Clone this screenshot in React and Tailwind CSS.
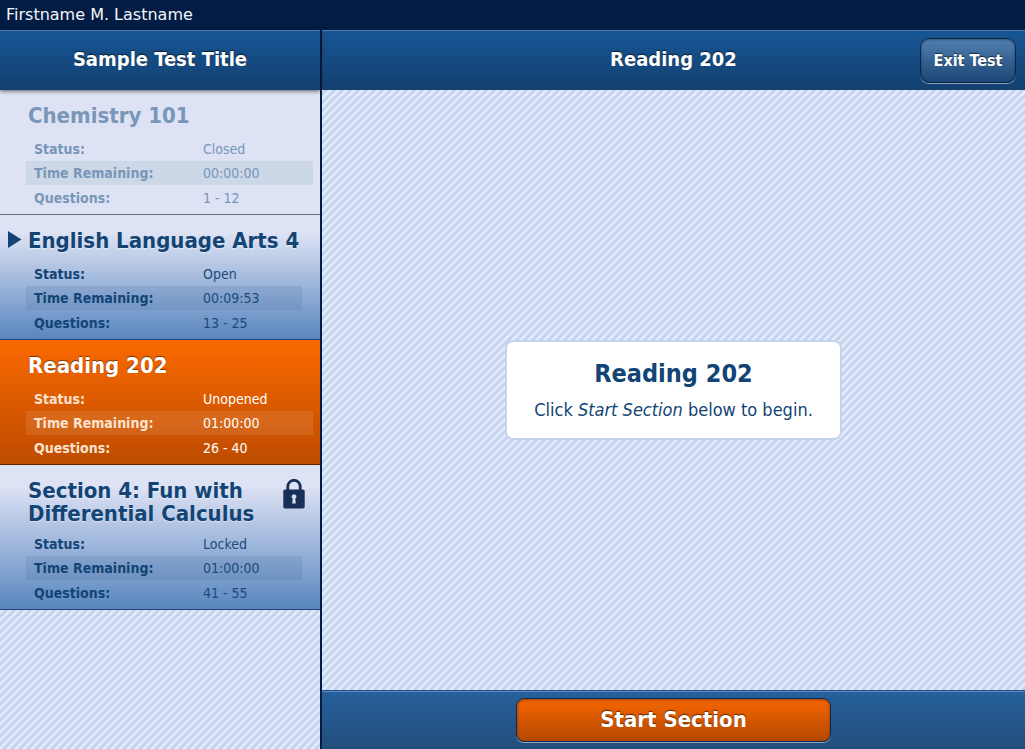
import React from "react";

const sections = [
  { title: "Chemistry 101", status: "Closed", time: "00:00:00", questions: "1 - 12", look: "closed" },
  { title: "English Language Arts 4", status: "Open", time: "00:09:53", questions: "13 - 25", look: "open", current: true },
  { title: "Reading 202", status: "Unopened", time: "01:00:00", questions: "26 - 40", look: "selected" },
  { title: "Section 4: Fun with Differential Calculus", status: "Locked", time: "01:00:00", questions: "41 - 55", look: "open", locked: true },
];

const looks = {
  closed: {
    box: "bg-[#dde2f4] border-[#6b6d78]",
    title: "text-[#7896b7]",
    label: "text-[#7896b7]",
    value: "text-[#7896b7]",
    band: "bg-[#ccd7e8]",
    table: "mr-[7px]",
  },
  open: {
    box: "bg-linear-to-b from-[#dde2f4] from-15% to-[#5986be] border-[#1d4575]",
    title: "text-[#124475] [text-shadow:0_1px_1px_rgba(255,255,255,0.5)]",
    label: "text-[#124475]",
    value: "text-[#1b4a7b]",
    band: "bg-[#124475]/10",
    table: "mr-[18px]",
  },
  selected: {
    box: "bg-linear-to-b from-[#fa6900] to-[#be4c00] border-[#5c2400]",
    title: "text-white [text-shadow:0_-1px_1px_rgba(0,0,0,0.5)]",
    label: "text-[#fde3d0]",
    value: "text-white",
    band: "bg-white/10",
    table: "mr-[7px]",
  },
};

function LockIcon() {
  return (
    <svg className="mr-[15px] h-[30px] w-[22px] shrink-0" viewBox="0 0 22 30" role="img" aria-label="Locked">
      <path d="M4.8 12V7.5a6.2 6.2 0 0 1 12.4 0V12" fill="none" stroke="#182f57" strokeWidth="2.8" />
      <rect x="0.3" y="10.5" width="21.4" height="19" rx="1.8" fill="#182f57" />
      <path d="M11 15.2a2.5 2.5 0 0 1 1.3 4.6l.5 4.7H9.2l.5-4.7A2.5 2.5 0 0 1 11 15.2z" fill="#d5dcef" />
    </svg>
  );
}

function Section({ section }) {
  const look = looks[section.look];
  const row = "pl-2 text-left font-bold w-[177px]";
  return (
    <li className={"border-b pb-1 " + look.box}>
      <div className="flex items-start pt-3.5">
        <div className="w-7 shrink-0 pl-2 pt-0.5">
          {section.current && (
            <svg className="h-[17px] w-3.5" viewBox="0 0 14 17" role="img" aria-label="Current section">
              <path d="M0 0L13.5 8.5L0 17z" fill="#124475" />
            </svg>
          )}
        </div>
        <h2 className={"min-h-[26px] flex-1 text-[22px] leading-[23px] font-bold " + look.title}>{section.title}</h2>
        {section.locked && <LockIcon />}
      </div>
      <div className={"ml-[26px] mt-[7px] " + look.table}>
        <table className="w-full text-sm leading-6">
          <tbody>
            <tr>
              <th scope="row" className={row + " h-6 " + look.label}>Status:</th>
              <td className={look.value}>{section.status}</td>
            </tr>
            <tr className={look.band}>
              <th scope="row" className={row + " h-6 " + look.label}>Time Remaining:</th>
              <td className={look.value}>{section.time}</td>
            </tr>
            <tr>
              <th scope="row" className={row + " h-[25px] " + look.label}>Questions:</th>
              <td className={look.value}>{section.questions}</td>
            </tr>
          </tbody>
        </table>
      </div>
    </li>
  );
}

const stripes =
  "bg-[linear-gradient(135deg,#c5d4ec_25%,#e2ebfd_25%,#e2ebfd_50%,#c5d4ec_50%,#c5d4ec_75%,#e2ebfd_75%)] bg-[length:8px_8px]";
const header = "h-[60px] border-t border-[#4a7bae] bg-linear-to-b from-[#175595] to-[#134170]";
const headerTitle = "pb-1 text-xl font-bold text-white [text-shadow:0_-1px_1px_rgba(0,0,0,0.6)]";

export default function App() {
  return (
    <div className="flex min-h-screen flex-col font-['DejaVu_Sans_Condensed','DejaVu_Sans',sans-serif]">
      <div className="h-[30px] bg-[#031c44] px-1.5 font-['DejaVu_Sans',sans-serif] text-base leading-[30px] text-[#f3f5f8]">
        Firstname M. Lastname
      </div>
      <div className={"flex flex-1 " + stripes}>
        <aside className="w-[322px] shrink-0 border-r-2 border-[#031c44]">
          <div className={"relative flex items-center justify-center shadow-[0_1px_4px_rgba(0,0,0,0.6)] " + header}>
            <h1 className={headerTitle}>Sample Test Title</h1>
          </div>
          <ul>
            {sections.map((s) => (
              <Section key={s.title} section={s} />
            ))}
          </ul>
        </aside>
        <div className="flex min-w-0 flex-1 flex-col">
          <header className={"grid grid-cols-[1fr_auto_1fr] items-center " + header}>
            <h2 className={"col-start-2 " + headerTitle}>Reading 202</h2>
            <button
              type="button"
              className="mr-[9px] h-[45px] w-24 justify-self-end rounded-[9px] border border-[#0b2747] bg-linear-to-b from-[#5180b0] to-[#1b4676] text-base font-bold text-white shadow-[0_1px_0_rgba(255,255,255,0.5),inset_0_1px_3px_rgba(0,0,0,0.35)] [text-shadow:0_-1px_1px_rgba(0,0,0,0.6)]"
            >
              Exit Test
            </button>
          </header>
          <main className="flex flex-1 items-center justify-center">
            <div className="rounded-lg border-2 border-[#c5d3ec] bg-white px-[27px] py-4 text-center text-[#124475]">
              <h2 className="text-[25px] leading-8 font-bold">Reading 202</h2>
              <p className="mt-2 text-lg leading-6">
                Click <em>Start Section</em> below to begin.
              </p>
            </div>
          </main>
          <footer className="flex justify-center border-t border-[#1c4c80] bg-linear-to-b from-[#175595]/92 to-[#134170]/92 py-[7px] shadow-[inset_0_1px_0_#5c8cbd]">
            <button
              type="button"
              className="h-11 w-[315px] rounded-lg border border-[#0c2a4d] bg-linear-to-b from-[#f56600] to-[#b54800] pb-0.5 text-[22px] font-bold text-white shadow-[0_1px_0_rgba(255,255,255,0.5),inset_0_1px_3px_rgba(0,0,0,0.35)] [text-shadow:0_-1px_1px_rgba(0,0,0,0.6)]"
            >
              Start Section
            </button>
          </footer>
        </div>
      </div>
    </div>
  );
}
